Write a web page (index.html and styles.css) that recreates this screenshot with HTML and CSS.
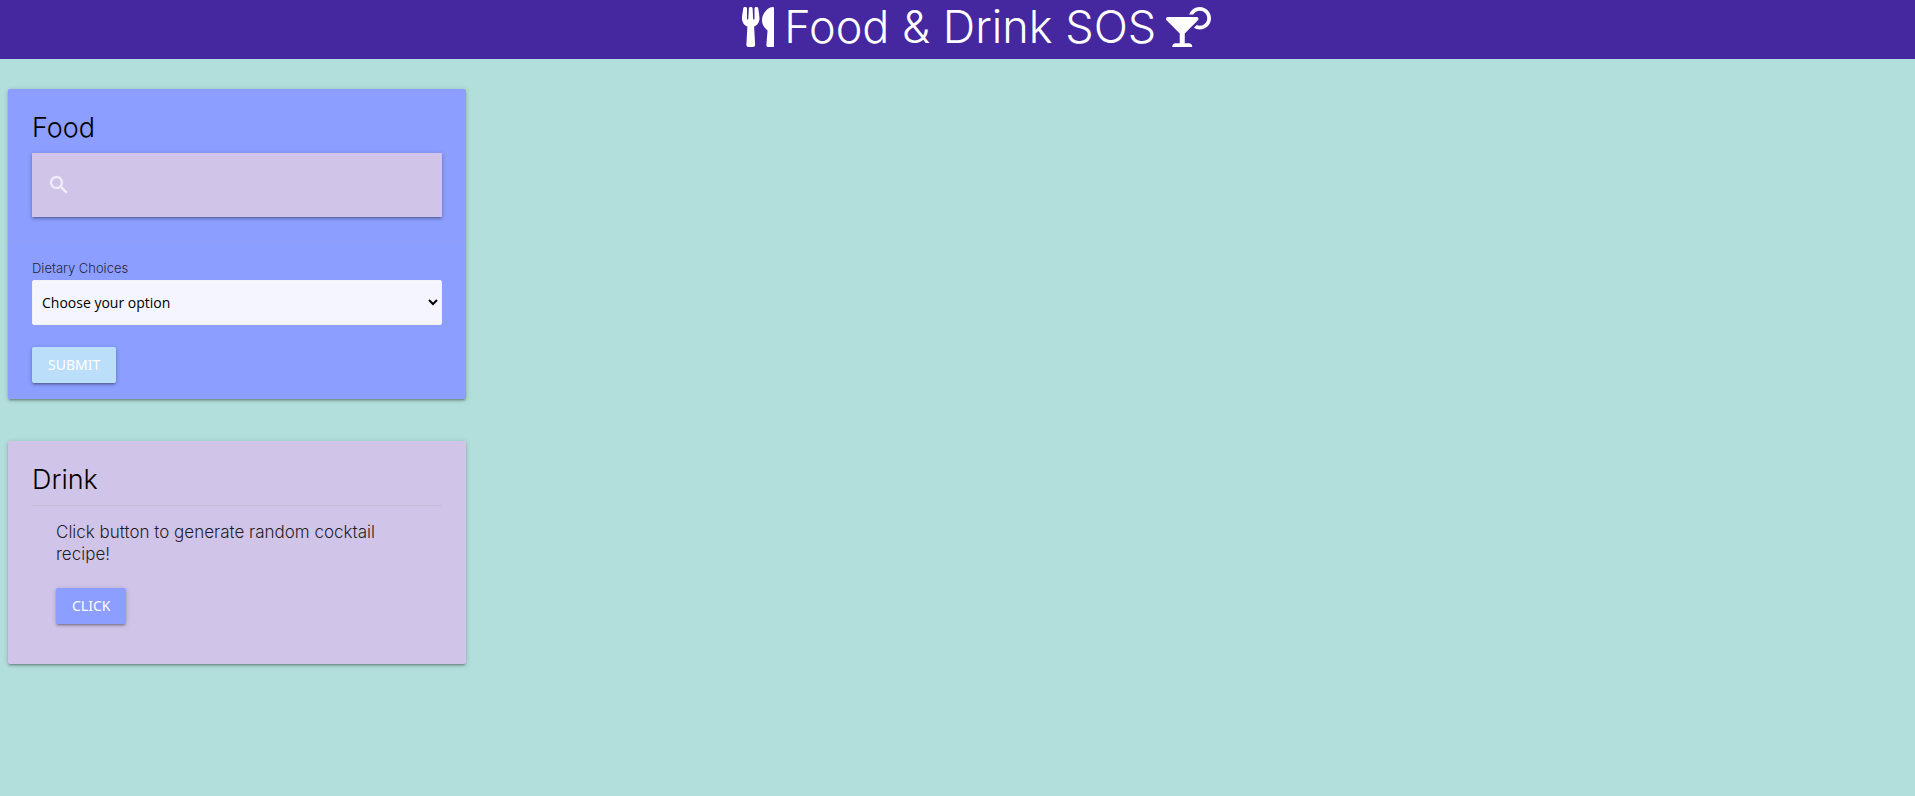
FILE: index.html
```html
<!DOCTYPE html>
<html lang="en">
<head>
<meta charset="utf-8">
<title>Food &amp; Drink SOS</title>
<link rel="stylesheet" href="styles.css">
</head>
<body>
<header class="navbar">
  <h1 class="brand">
    <svg class="brand-icon" viewBox="0 0 416 512" aria-hidden="true"><path d="M207.9 15.2c.8 4.7 16.1 94.5 16.1 128.8 0 52.3-27.8 89.6-68.9 104.6L168 486.7c.7 13.7-10.2 25.3-24 25.3H80c-13.7 0-24.7-11.5-24-25.3l12.9-238.1C27.7 233.6 0 196.2 0 144 0 109.6 15.3 19.9 16.1 15.2 19.3-5.1 61.4-5.4 64 16.3v141.2c1.3 3.4 15.1 3.2 16 0 1.4-25.3 7.9-139.2 8-141.8 3.3-20.8 44.7-20.8 47.9 0 .2 2.7 6.6 116.5 8 141.8.9 3.2 14.8 3.4 16 0V16.3c2.6-21.6 44.8-21.4 47.9-1.1zm119.2 285.7l-15 185.1c-1.2 14 9.9 26 23.9 26h56c13.3 0 24-10.7 24-24V24c0-13.2-10.7-24-24-24-82.5 0-221.4 178.5-64.9 300.9z"/></svg>
    <span>Food &amp; Drink SOS</span>
    <svg class="brand-icon" viewBox="0 0 576 512" aria-hidden="true"><path d="M296 464h-56V338.78l168.74-168.73c15.52-15.52 4.53-42.05-17.42-42.05H24.68c-21.95 0-32.94 26.53-17.42 42.05L176 338.78V464h-56c-22.09 0-40 17.91-40 40 0 4.42 3.58 8 8 8h240c4.42 0 8-3.58 8-8 0-22.09-17.91-40-40-40zM432 0c-62.61 0-115.35 40.2-135.18 96h52.54c16.65-28.55 47.27-48 82.64-48 52.93 0 96 43.06 96 96s-43.07 96-96 96c-14.04 0-27.29-3.2-39.32-8.64l-35.26 35.26C379.23 279.92 404.59 288 432 288c79.53 0 144-64.47 144-144S511.53 0 432 0z"/></svg>
  </h1>
</header>
<main class="sidebar">
  <form class="card card-food">
    <div class="card-content">
      <h2 class="card-title">Food</h2>
      <div class="search">
        <label for="search" aria-label="Search food"><svg class="search-icon" viewBox="0 0 24 24" aria-hidden="true"><path d="M15.5 14h-.79l-.28-.27C15.41 12.59 16 11.11 16 9.5 16 5.91 13.09 3 9.5 3S3 5.91 3 9.5 5.91 16 9.5 16c1.61 0 3.09-.59 4.23-1.57l.27.28v.79l5 4.99L20.49 19l-4.99-5zm-6 0C7.01 14 5 11.99 5 9.5S7.01 5 9.5 5 14 7.01 14 9.5 11.99 14 9.5 14z"/></svg></label>
        <input class="search-input" id="search" type="search">
      </div>
    </div>
    <div class="card-action">
      <label class="field-label" for="diet">Dietary Choices</label>
      <select class="select" id="diet">
        <option>Choose your option</option>
      </select>
      <button class="btn btn-submit" type="submit">Submit</button>
    </div>
  </form>
  <section class="card card-drink">
    <div class="card-content">
      <h2 class="card-title">Drink</h2>
      <div class="drink-body">
        <p class="drink-text">Click button to generate random cocktail recipe!</p>
        <button class="btn btn-click" type="button">Click</button>
      </div>
    </div>
  </section>
</main>
</body>
</html>
```
FILE: styles.css
```css
*, *::before, *::after {
  box-sizing: border-box;
}

body {
  margin: 0;
  background: #b2dfdb;
  color: rgba(0, 0, 0, 0.87);
  font-family: Inter, sans-serif;
  font-weight: 300;
}

.navbar {
  background: #4527a0;
  color: #fff;
}

.brand {
  display: flex;
  justify-content: center;
  align-items: center;
  gap: 10px;
  margin: 0;
  padding: 0 0 5px 38px;
  font-size: 45px;
  line-height: 54px;
  font-weight: 300;
}

.brand-icon {
  height: 40px;
  fill: currentColor;
}

.sidebar {
  display: flex;
  flex-direction: column;
  gap: 42px;
  width: 25%;
  min-width: 320px;
  padding: 30px 13px 30px 8px;
}

.card {
  border-radius: 2px;
  box-shadow: 0 2px 2px 0 rgba(0, 0, 0, 0.14), 0 3px 1px -2px rgba(0, 0, 0, 0.12), 0 1px 5px 0 rgba(0, 0, 0, 0.2);
}

.card-food {
  background: #8c9eff;
}

.card-drink {
  padding-bottom: 16px;
  background: #d1c4e9;
}

.card-content {
  padding: 24px;
}

.card-action {
  display: flex;
  flex-direction: column;
  padding: 16px 24px;
  border-top: 1px solid rgba(160, 160, 160, 0.2);
}

.card-title {
  margin: 0;
  padding-bottom: 10px;
  color: #000;
  font-size: 27px;
  line-height: 30px;
  font-weight: 300;
}

.search {
  display: flex;
  align-items: center;
  height: 64px;
  padding-left: 15px;
  background: #d1c4e9;
  box-shadow: 0 2px 2px 0 rgba(0, 0, 0, 0.14), 0 3px 1px -2px rgba(0, 0, 0, 0.12), 0 1px 5px 0 rgba(0, 0, 0, 0.2);
}

.search-icon {
  display: block;
  width: 24px;
  height: 24px;
  fill: rgba(255, 255, 255, 0.7);
  stroke: rgba(255, 255, 255, 0.4);
  stroke-width: 0.5;
}

.search-input {
  flex: 1;
  min-width: 0;
  height: 100%;
  padding: 0 16px;
  border: 0;
  outline: 0;
  background: transparent;
  font: inherit;
}

.field-label {
  padding-bottom: 2px;
  color: rgba(0, 0, 0, 0.8);
  font-size: 13px;
  line-height: 20px;
}

.select {
  height: 45px;
  margin-bottom: 22px;
  padding: 5px;
  border: 1px solid #f2f2f2;
  border-radius: 2px;
  background-color: #f5f5ff;
  color: #000;
  font: 400 14px "Open Sans", sans-serif;
}

.btn {
  align-self: flex-start;
  height: 36px;
  padding: 0 16px 2px;
  border: 0;
  border-radius: 2px;
  box-shadow: 0 2px 2px 0 rgba(0, 0, 0, 0.14), 0 3px 1px -2px rgba(0, 0, 0, 0.12), 0 1px 5px 0 rgba(0, 0, 0, 0.2);
  color: #fff;
  font: 400 14px "Noto Sans", sans-serif;
  text-transform: uppercase;
}

.btn-submit {
  background: #bbdefb;
}

.btn-click {
  background: #8c9eff;
}

.drink-body {
  display: flex;
  flex-direction: column;
  gap: 23px;
  padding: 15px 24px 0;
  border-top: 1px solid rgba(160, 160, 160, 0.2);
}

.drink-text {
  margin: 0;
  font-size: 17px;
  line-height: 22px;
}
```
